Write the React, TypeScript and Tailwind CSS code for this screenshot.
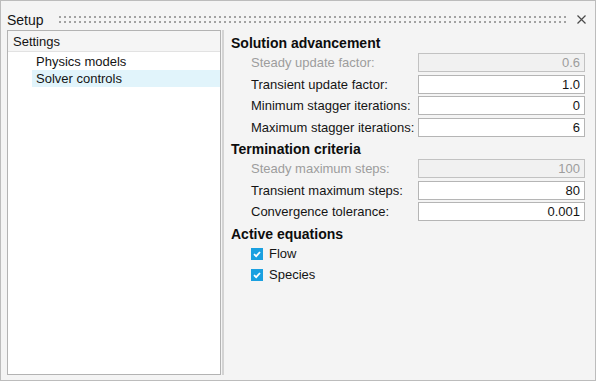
import React from 'react';

interface FieldProps {
  label: string;
  value: string;
  disabled?: boolean;
}

const Field: React.FC<FieldProps> = ({ label, value, disabled }) => (
  <div className="flex h-[21.5px] items-start">
    <div
      className={
        disabled
          ? 'w-[187px] pl-[20px] text-[13px] leading-[19px] text-[#9d9d9d]'
          : 'w-[187px] pl-[20px] text-[13px] leading-[19px] text-[#141414]'
      }
    >
      {label}
    </div>
    <div
      className={
        disabled
          ? 'h-[19px] w-[167px] border border-[#c2c2c2] bg-[#f1f1f1] pr-[4px] text-right text-[13px] leading-[17px] text-[#9d9d9d]'
          : 'h-[19px] w-[167px] border border-[#b5b5b5] bg-white pr-[4px] text-right text-[13px] leading-[17px] text-[#141414]'
      }
    >
      {value}
    </div>
  </div>
);

const Section: React.FC<{ title: string }> = ({ title }) => (
  <div className="h-[20px] text-[14px] font-bold leading-[20px] text-[#0d0d0d]">{title}</div>
);

const Check: React.FC<{ label: string }> = ({ label }) => (
  <div className="flex h-[21px] items-center pl-[20px]">
    <span className="flex h-[12px] w-[12px] items-center justify-center bg-[#1aa0e0]">
      <svg width="10" height="10" viewBox="0 0 10 10">
        <path d="M2 5.2 L4.2 7.2 L8 3" fill="none" stroke="white" strokeWidth="1.8" />
      </svg>
    </span>
    <span className="ml-[6px] text-[13px] text-[#141414]">{label}</span>
  </div>
);

export default function App() {
  return (
    <div className="h-[382px] w-[597px] bg-white font-['Liberation_Sans',Arial,sans-serif]">
      <div className="flex h-[381px] w-[596px] flex-col border border-[#bcbcbc] bg-[#f4f4f4]">
        {/* Title bar */}
        <div className="flex h-[29px] shrink-0 items-center pl-[6px] pr-[9px] pt-[8px]">
          <span className="text-[14px] leading-[16px] text-[#141414]">Setup</span>
          <svg className="ml-[15px] flex-1" height="8">
            <defs>
              <pattern id="grip" width="5" height="5" patternUnits="userSpaceOnUse">
                <rect x="0" y="0" width="2" height="2" fill="#a2a2a2" />
              </pattern>
            </defs>
            <rect x="0" y="0" width="100%" height="8" fill="url(#grip)" />
          </svg>
          <svg className="ml-[11px]" width="9" height="9" viewBox="0 0 9 9">
            <path d="M0.5 0.5 L8.5 8.5 M8.5 0.5 L0.5 8.5" stroke="#4a4a4a" strokeWidth="1.2" />
          </svg>
        </div>

        {/* Body */}
        <div className="flex min-h-0 flex-1 pb-[5px] pl-[6px]">
          {/* Tree panel */}
          <div className="flex w-[214px] flex-col border border-[#b3b3b3] bg-white">
            <div className="h-[21px] border-b border-[#e2e2e2] bg-[#f5f5f5] pl-[5px] text-[13px] leading-[21px] text-[#141414]">
              Settings
            </div>
            <div className="ml-[25px] h-[18px] pl-[3px] text-[13px] leading-[19px] text-[#141414]">
              Physics models
            </div>
            <div className="ml-[24px] h-[17px] bg-[#e1f4fb] pl-[4px] text-[13px] leading-[18px] text-[#141414]">
              Solver controls
            </div>
          </div>

          {/* Splitter */}
          <div className="ml-[1px] w-[2px] bg-[#d3d3d3]" />

          {/* Settings form */}
          <div className="flex flex-col pl-[7px] pt-[3px]">
            <Section title="Solution advancement" />
            <Field label="Steady update factor:" value="0.6" disabled />
            <Field label="Transient update factor:" value="1.0" />
            <Field label="Minimum stagger iterations:" value="0" />
            <Field label="Maximum stagger iterations:" value="6" />
            <Section title="Termination criteria" />
            <Field label="Steady maximum steps:" value="100" disabled />
            <Field label="Transient maximum steps:" value="80" />
            <Field label="Convergence tolerance:" value="0.001" />
            <Section title="Active equations" />
            <Check label="Flow" />
            <Check label="Species" />
          </div>
        </div>
      </div>
    </div>
  );
}
